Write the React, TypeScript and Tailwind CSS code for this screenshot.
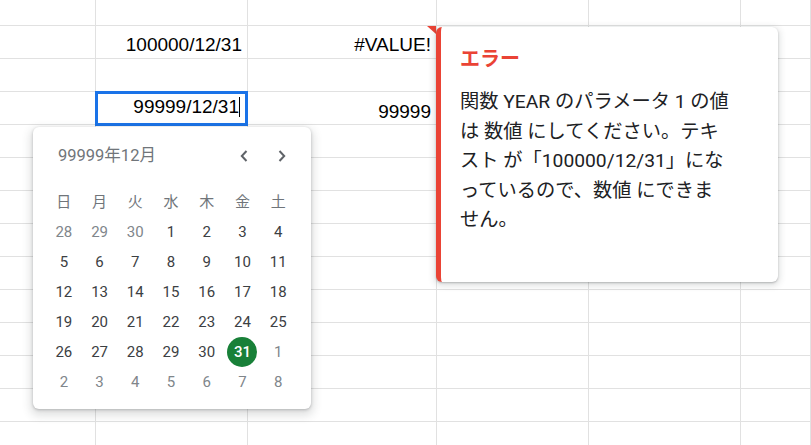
import React from 'react';

const FONT = 'font-["Roboto","Noto_Sans_CJK_JP",sans-serif]';
const CELL_FONT = 'font-["Liberation_Sans","Arial",sans-serif]';

const COLS = ['w-[96px]', 'w-[152px]', 'w-[189px]', 'w-[152px]', 'w-[152px]', 'flex-1'];
const ROW_COUNT = 14;

const WEEKDAYS = ['日', '月', '火', '水', '木', '金', '土'];

// 42 cells: trailing days of November, December, leading days of January
const DAYS: { n: number; inMonth: boolean }[] = [
  ...[28, 29, 30].map((n) => ({ n, inMonth: false })),
  ...Array.from({ length: 31 }, (_, i) => ({ n: i + 1, inMonth: true })),
  ...Array.from({ length: 8 }, (_, i) => ({ n: i + 1, inMonth: false })),
];

function cellText(row: number, col: number): string | null {
  if (row === 1 && col === 1) return '100000/12/31';
  if (row === 1 && col === 2) return '#VALUE!';
  if (row === 3 && col === 2) return '99999';
  return null;
}

function Chevron({ dir }: { dir: 'left' | 'right' }) {
  return (
    <svg width="8" height="12" viewBox="0 0 8 12" className="block">
      <polyline
        points={dir === 'left' ? '6.5,1 1.8,6 6.5,11' : '1.5,1 6.2,6 1.5,11'}
        fill="none"
        stroke="#5f6368"
        strokeWidth="2"
      />
    </svg>
  );
}

function Grid() {
  return (
    <div className="flex flex-col">
      {Array.from({ length: ROW_COUNT }, (_, r) => (
        <div key={r} className={`flex ${r === 0 ? 'h-[26px]' : 'h-[33px]'}`}>
          {COLS.map((w, c) => {
            const text = cellText(r, c);
            return (
              <div
                key={c}
                className={`${w} relative shrink-0 border-r border-b border-[#e1e1e1] flex items-end justify-end pr-[5px] ${r === 3 ? 'pb-[1px]' : 'pb-[2px]'}`}
              >
                {text && (
                  <span className={`${CELL_FONT} text-[19px] leading-[22px] text-black whitespace-nowrap`}>{text}</span>
                )}
                {r === 1 && c === 2 && (
                  <svg width="9" height="8" viewBox="0 0 9 8" className="absolute top-0 right-0">
                    <polygon points="0,0 9,0 9,8" fill="#ea4335" />
                  </svg>
                )}
              </div>
            );
          })}
        </div>
      ))}
    </div>
  );
}

function Editor() {
  return (
    <div className="absolute left-[95px] top-[91px] w-[153px] h-[35px] border-[3px] border-[#1a73e8] bg-white flex justify-end items-start pr-[5px] pt-[2px]">
      <span className={`${CELL_FONT} text-[19px] leading-[22px] text-black whitespace-nowrap`}>99999/12/31</span>
      <span className="mt-[1px] w-px h-[20px] bg-black" />
    </div>
  );
}

function DatePicker() {
  return (
    <div
      className={`${FONT} absolute left-[33px] top-[127px] w-[278px] h-[282px] rounded-md bg-white shadow-[0_1px_3px_rgba(60,64,67,0.3),0_4px_8px_3px_rgba(60,64,67,0.15)] pt-[14px] pl-[13px]`}
    >
      <div className="flex items-center h-[30px] pl-[12px] pr-[25px]">
        <span className="text-[16.5px] text-[#70757a]">99999年12月</span>
        <div className="ml-auto flex items-center gap-[30px]">
          <Chevron dir="left" />
          <Chevron dir="right" />
        </div>
      </div>
      <div className="mt-[16px] w-[250px] grid grid-cols-7">
        {WEEKDAYS.map((d) => (
          <div key={d} className="h-[30px] flex items-center justify-center text-[15px] text-[#70757a]">
            {d}
          </div>
        ))}
        {DAYS.map((d, i) => {
          const selected = d.inMonth && d.n === 31;
          return (
            <div key={i} className="h-[30px] flex items-center justify-center">
              {selected ? (
                <span className="w-[30px] h-[30px] rounded-full bg-[#188038] text-white font-medium text-[15px] flex items-center justify-center">
                  {d.n}
                </span>
              ) : (
                <span className={`text-[15px] ${d.inMonth ? 'text-[#3c4043]' : 'text-[#80868b]'}`}>{d.n}</span>
              )}
            </div>
          );
        })}
      </div>
    </div>
  );
}

function ErrorTip() {
  const lines = [
    '関数 YEAR のパラメータ 1 の値',
    'は 数値 にしてください。テキ',
    'スト が「100000/12/31」にな',
    'っているので、数値 にできま',
    'せん。',
  ];
  return (
    <div
      className={`${FONT} absolute left-[436px] top-[27px] w-[342px] h-[255px] rounded-md bg-white border-l-[5px] border-[#ea4335] shadow-[0_1px_2px_rgba(60,64,67,0.3),0_2px_6px_2px_rgba(60,64,67,0.15)] pl-[19px] pt-[18px]`}
    >
      <div className="text-[20px] leading-[28px] font-bold text-[#ea4335]">エラー</div>
      <div className="mt-[14px] text-[19.25px] leading-[29.5px] text-[#202124]">
        {lines.map((l) => (
          <div key={l} className="whitespace-nowrap">
            {l}
          </div>
        ))}
      </div>
    </div>
  );
}

export default function App() {
  return (
    <div className="relative w-[811px] h-[445px] overflow-hidden bg-white">
      <Grid />
      <Editor />
      <DatePicker />
      <ErrorTip />
    </div>
  );
}
